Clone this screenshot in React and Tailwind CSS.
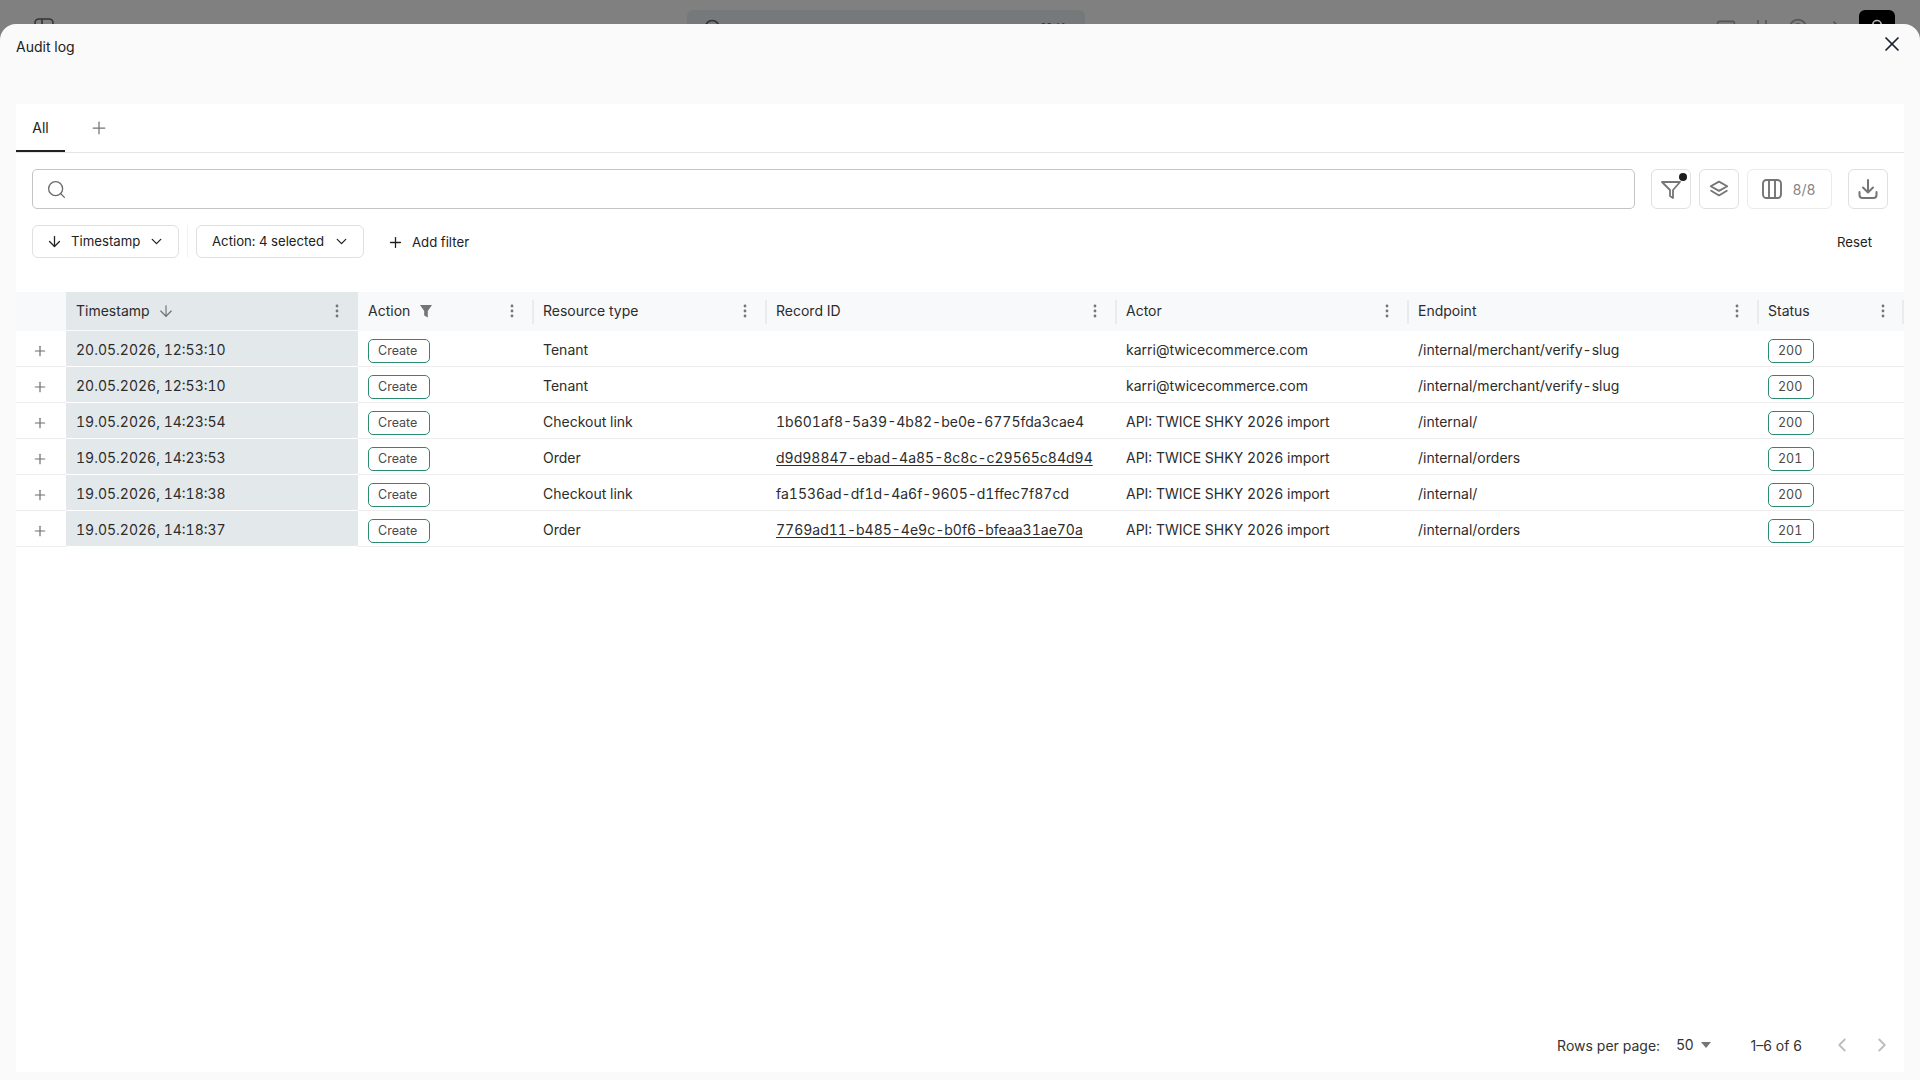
import React from "react";
import { Plus, Search, X, ChevronDown, ChevronLeft, ChevronRight, ArrowDown, ArrowRight, UserRound, CircleHelp, Keyboard } from "lucide-react";

const Dots = () => (
  <svg width="4" height="14" viewBox="0 0 4 14" className="text-[#757575]" fill="currentColor">
    <circle cx="2" cy="2" r="1.4" />
    <circle cx="2" cy="7" r="1.4" />
    <circle cx="2" cy="12" r="1.4" />
  </svg>
);

const cols = [
  { name: "Timestamp", w: "w-[292px] pr-[19px]", extra: "sort", bg: "bg-[#e3e9eb]" },
  { name: "Action", w: "w-[175px] pr-[19px]", extra: "filter" },
  { name: "Resource type", w: "w-[233px] pr-[19px]" },
  { name: "Record ID", w: "w-[350px] pr-[19px]" },
  { name: "Actor", w: "w-[292px] pr-[19px]" },
  { name: "Endpoint", w: "w-[350px] pr-[19px]" },
  { name: "Status", w: "w-[145px] pr-[18px]" },
];

const rows = [
  ["20.05.2026, 12:53:10", "Tenant", "", false, "karri@twicecommerce.com", "/internal/merchant/verify-slug", "200"],
  ["20.05.2026, 12:53:10", "Tenant", "", false, "karri@twicecommerce.com", "/internal/merchant/verify-slug", "200"],
  ["19.05.2026, 14:23:54", "Checkout link", "1b601af8-5a39-4b82-be0e-6775fda3cae4", false, "API: TWICE SHKY 2026 import", "/internal/", "200"],
  ["19.05.2026, 14:23:53", "Order", "d9d98847-ebad-4a85-8c8c-c29565c84d94", true, "API: TWICE SHKY 2026 import", "/internal/orders", "201"],
  ["19.05.2026, 14:18:38", "Checkout link", "fa1536ad-df1d-4a6f-9605-d1ffec7f87cd", false, "API: TWICE SHKY 2026 import", "/internal/", "200"],
  ["19.05.2026, 14:18:37", "Order", "7769ad11-b485-4e9c-b0f6-bfeaa31ae70a", true, "API: TWICE SHKY 2026 import", "/internal/orders", "201"],
];

const Badge = ({ children, w }) => (
  <span className={`mt-[5px] inline-flex h-6 items-center rounded-[5px] border border-[#2b8a70] bg-white pl-[9px] text-[12.5px] text-[#4a4a4a] ${w}`}>
    {children}
  </span>
);

const IconBtn = ({ children, className = "" }) => (
  <div className={`flex h-10 items-center justify-center rounded-md border border-[#e0e0e0] bg-white ${className}`}>
    {children}
  </div>
);

function TicksIcon() {
  return (
    <svg width="20" height="20" viewBox="0 0 20 20" fill="none" stroke="currentColor" strokeWidth="1.6" className="ml-4 mt-2">
      <path d="M6 2v6M14 2v6" />
    </svg>
  );
}

export default function App() {
  return (
    <div className="relative h-screen w-full overflow-hidden bg-[#808080] font-['Inter',sans-serif] text-[14px] text-[#212121] tabular-nums">
      {/* page behind the dialog */}
      <div className="flex h-6 items-start pl-[34px] pt-[10px]">
        <svg width="20" height="20" viewBox="0 0 20 20" fill="none" stroke="#333" strokeWidth="1.6" className="mt-2 shrink-0">
          <rect x="1" y="1" width="18" height="18" rx="4" />
          <path d="M8 1v18M1 7h7" />
        </svg>
        <div className="ml-[633px] flex h-10 w-[398px] shrink-0 items-start rounded-md bg-[#757979] pl-[16px] pr-[20px] pt-2 text-[#333]">
          <Search size={20} />
          <span className="ml-2 mt-[1px]">Search</span>
          <span className="ml-auto mt-[1px] text-[13px]">⌘ K</span>
        </div>
        <div className="ml-[631px] flex shrink-0 items-start text-[#555]">
          <Keyboard size={20} className="mt-2" />
          <TicksIcon />
          <CircleHelp size={20} className="ml-4 mt-2" />
          <ArrowRight size={20} className="ml-4 mt-2" />
          <div className="ml-[15px] flex h-10 w-9 items-start justify-center rounded-md bg-black pt-2 text-[#bbb]">
            <UserRound size={20} />
          </div>
        </div>
      </div>

      {/* dialog */}
      <div className="absolute inset-x-0 bottom-0 top-6 flex flex-col rounded-t-2xl bg-[#fafafa]">
        <div className="flex h-20 shrink-0 items-start justify-between pl-4 pr-4 pt-3">
          <span className="leading-[22px]">Audit log</span>
          <X size={24} className="-mt-[4px] text-[#1a2030]" strokeWidth={1.7} />
        </div>

        <div className="mx-4 mb-2 flex min-h-0 flex-1 flex-col bg-white">
          {/* tabs */}
          <div className="flex h-[49px] shrink-0 border-b border-[#e6e6e6]">
            <div className="flex h-[48px] w-[49px] items-center justify-center border-b-2 border-[#212121]">All</div>
            <div className="ml-[24px] flex h-[48px] items-center">
              <Plus size={20} strokeWidth={1.5} className="text-[#757575]" />
            </div>
          </div>

          {/* search row */}
          <div className="mt-4 flex shrink-0 pl-4 pr-4">
            <div className="flex h-10 flex-1 items-center rounded-[5px] border border-[#c4c4c4] pl-[13px]">
              <Search size={21} strokeWidth={1.5} className="text-[#6b6b6b]" />
            </div>
            <IconBtn className="relative ml-4 w-10">
              <svg width="24" height="24" viewBox="0 0 24 24" fill="none" stroke="#757575" strokeWidth="1.8" strokeLinejoin="round" strokeLinecap="round">
                <path d="M3 5h18l-7 8v8l-3-2v-6z" />
              </svg>
              <span className="absolute right-[3px] top-[3px] h-2 w-2 rounded-full bg-[#1c1c1c]" />
            </IconBtn>
            <IconBtn className="ml-2 w-10">
              <svg width="22" height="22" viewBox="0 0 24 24" fill="none" stroke="#757575" strokeWidth="2" strokeLinejoin="round" strokeLinecap="round">
                <path d="M12 4l9 5-9 5-9-5z" />
                <path d="M3.5 14l8.5 5 8.5-5" />
              </svg>
            </IconBtn>
            <IconBtn className="ml-2 w-[85px] gap-[9px] border-[#ebebeb] pr-[2px]">
              <svg width="22" height="22" viewBox="0 0 22 22" fill="none" stroke="#757575" strokeWidth="1.9">
                <rect x="2" y="2" width="18" height="18" rx="3.5" />
                <path d="M8 2v18M14 2v18" />
              </svg>
              <span className="text-[#858585]">8/8</span>
            </IconBtn>
            <IconBtn className="ml-4 w-10">
              <svg width="24" height="24" viewBox="0 0 24 24" fill="none" stroke="#757575" strokeWidth="2" strokeLinecap="round" strokeLinejoin="round">
                <path d="M12 3v12M7 10.5l5 5 5-5" />
                <path d="M3.5 15v3a3 3 0 0 0 3 3h11a3 3 0 0 0 3-3v-3" />
              </svg>
            </IconBtn>
          </div>

          {/* filter row */}
          <div className="mt-4 flex h-[33px] shrink-0 items-center pl-4 pr-[32px] text-[13.2px]">
            <div className="flex h-[33px] w-[147px] items-center rounded-md border border-[#e0e0e0] pl-[13px]">
              <ArrowDown size={17} strokeWidth={1.8} />
              <span className="ml-[8px]">Timestamp</span>
              <ChevronDown size={17} strokeWidth={1.8} className="ml-[8px]" />
            </div>
            <div className="mx-2 h-[33px] w-px bg-[#f2f2f2]" />
            <div className="flex h-[33px] w-[168px] items-center rounded-md border border-[#e0e0e0] pl-[15px]">
              <span>Action: 4 selected</span>
              <ChevronDown size={17} strokeWidth={1.8} className="ml-[9px]" />
            </div>
            <Plus size={17} strokeWidth={1.8} className="ml-[23px] mt-[1px]" />
            <span className="ml-[8px] mt-[2px]">Add filter</span>
            <span className="ml-auto mt-[2px]">Reset</span>
          </div>

          {/* table */}
          <div className="mt-[34px] shrink-0 text-[#2c2c2c]">
            <div className="flex h-[39px] bg-[#f8f9fb]">
              <div className="w-[50px]" />
              {cols.map((c) => (
                <div key={c.name} className={`relative flex h-[38px] items-center pb-[1px] pl-[10px] ${c.w} ${c.bg || ""}`}>
                  <span>{c.name}</span>
                  {c.extra === "sort" && <ArrowDown size={18} strokeWidth={1.5} className="ml-[7px] text-[#6e6e6e]" />}
                  {c.extra === "filter" && (
                    <svg width="14" height="14" viewBox="0 0 14 14" className="ml-[9px]" fill="#757575">
                      <path d="M1 1h12L8.8 7v6.5L5.2 11.5V7z" />
                    </svg>
                  )}
                  <span className="ml-auto"><Dots /></span>
                  {c.name !== "Timestamp" && <span className="absolute -right-px top-2 h-6 w-[2px] bg-[#e9ebed]" />}
                </div>
              ))}
            </div>
            {rows.map((r, i) => (
              <div key={i} className="flex h-9 border-b border-[#ececec] text-[14px]">
                <div className="flex w-[50px] items-center justify-center pr-[2px] pt-[4px]">
                  <Plus size={16} strokeWidth={1.8} className="text-[#6e6e6e]" />
                </div>
                <div className="flex w-[292px] items-center border-b border-white bg-[#e3e9eb] pl-[10px] pt-[2px] mb-[-1px]">{r[0]}</div>
                <div className="flex w-[175px] items-center pl-[10px]"><Badge w="w-[62px]">Create</Badge></div>
                <div className="flex w-[233px] items-center pl-[10px] pt-[2px]">{r[1]}</div>
                <div className="flex w-[350px] items-center pl-[10px] pt-[2px]">
                  <span className={r[3] ? "underline underline-offset-2" : ""}>{r[2]}</span>
                </div>
                <div className="flex w-[292px] items-center pl-[10px] pt-[2px]">{r[4]}</div>
                <div className="flex w-[350px] items-center pl-[10px] pt-[2px]">{r[5]}</div>
                <div className="flex w-[145px] items-center pl-[10px]"><Badge w="w-[46px]">{r[6]}</Badge></div>
              </div>
            ))}
          </div>

          {/* pagination */}
          <div className="mt-auto flex h-[52px] shrink-0 items-center justify-end pb-[2px] pr-[11px] text-[14px] text-[#333] [font-variant-numeric:normal]">
            <span>Rows per page:</span>
            <span className="-mt-[2px] ml-[16px]">50</span>
            <svg width="12" height="6" viewBox="0 0 12 6" className="ml-[7px]" fill="#757575"><path d="M1 0h10L6 6z" /></svg>
            <span className="ml-[38px]">1–6 of 6</span>
            <ChevronLeft size={22} strokeWidth={2} className="ml-[29px] text-[#bdbdbd]" />
            <ChevronRight size={22} strokeWidth={2} className="ml-[18px] text-[#bdbdbd]" />
          </div>
        </div>
      </div>
    </div>
  );
}
